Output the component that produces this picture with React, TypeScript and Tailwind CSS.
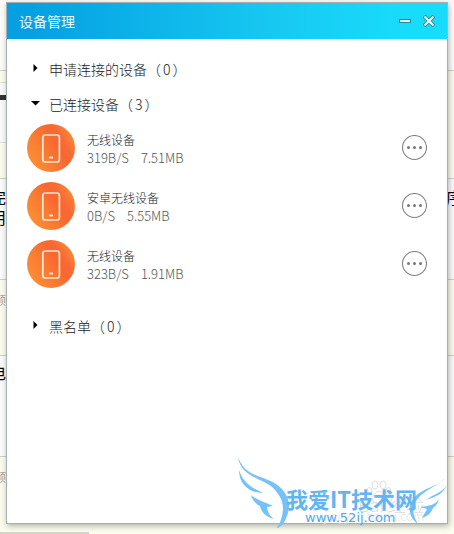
import React from "react";

type Device = { name: string; speed: string; total: string };

const devices: Device[] = [
  { name: "无线设备", speed: "319B/S", total: "7.51MB" },
  { name: "安卓无线设备", speed: "0B/S", total: "5.55MB" },
  { name: "无线设备", speed: "323B/S", total: "1.91MB" },
];

function PhoneIcon() {
  return (
    <svg viewBox="0 0 48 48" className="size-12 shrink-0" aria-hidden="true">
      <defs>
        <linearGradient id="disc" x1="0" y1="0.8" x2="1" y2="0.2">
          <stop offset="0" stopColor="#fb9236" />
          <stop offset="0.3" stopColor="#fb7f33" />
          <stop offset="0.62" stopColor="#f96731" />
          <stop offset="0.75" stopColor="#f86a35" />
          <stop offset="1" stopColor="#fb9036" />
        </linearGradient>
      </defs>
      <circle cx="24" cy="24" r="24" fill="url(#disc)" />
      <rect x="15.8" y="11" width="16.6" height="27" rx="2.5" fill="none" stroke="#ffe9cf" strokeWidth="1.7" />
      <path d="M22 33.5h4" stroke="#fff3dd" strokeWidth="1.8" />
    </svg>
  );
}

function MoreIcon() {
  return (
    <svg viewBox="0 0 26 26" className="size-[26px]" aria-hidden="true">
      <circle cx="13.5" cy="12.5" r="12" fill="none" stroke="#808080" strokeWidth="1.1" />
      <g fill="#777">
        <circle cx="7.5" cy="12.5" r="1.5" />
        <circle cx="13.5" cy="12.5" r="1.5" />
        <circle cx="19.5" cy="12.5" r="1.5" />
      </g>
    </svg>
  );
}

function GroupHeading({ label, count, open = false }: { label: string; count: number; open?: boolean }) {
  return (
    <button
      type="button"
      aria-expanded={open}
      className="flex h-5 items-center gap-2 pl-1 text-left text-sm leading-5 font-light text-[#222]"
    >
      <svg viewBox="0 0 10 10" className="size-2.5 shrink-0" aria-hidden="true">
        <path d={open ? "M0 2H9L4.5 6.5Z" : "M2.5 0V8L6.5 4Z"} fill="#000" />
      </svg>
      <span>
        {label}（<span className="mx-0.5">{count}</span>）
      </span>
    </button>
  );
}

function DeviceRow({ device }: { device: Device }) {
  return (
    <li className="flex items-center">
      <PhoneIcon />
      <div className="ml-3 flex-1 pt-1 font-light">
        <p className="text-xs leading-4 text-[#222]">{device.name}</p>
        <p className="flex gap-3 text-[13px] leading-5 text-[#555]">
          <span>{device.speed}</span>
          <span>{device.total}</span>
        </p>
      </div>
      <button type="button" aria-label="更多">
        <MoreIcon />
      </button>
    </li>
  );
}

function PageBehind() {
  return (
    <div className="flex min-h-screen flex-col bg-[#fcfcee] text-base leading-5 text-black">
      <div className="h-[71px] border-b border-[#d0d0c8] bg-[#fcfcfb]" />
      <div className="flex h-[108px] border-b border-[#cfcfc7]">
        <div className="flex w-[7px] flex-col">
          <div className="h-[11px]" />
          <div className="h-[61px] border-y border-[#dededa] bg-[#fafafa] pt-[12px]">
            <div className="h-[5px] bg-[#333]" />
          </div>
        </div>
      </div>
      <div className="flex h-[101px] justify-between border-b border-[#cfcfc7] bg-[#fbfbfb] pt-2">
        <div className="-ml-2.5 w-4">完用</div>
        <div className="-mr-2 w-4">序</div>
      </div>
      <div className="h-[76px] border-b border-[#cfcfc7] pt-2.5 text-xs leading-5 text-[#aaa]">
        <div className="-ml-1.5">倾</div>
      </div>
      <div className="h-[101px] border-b border-[#cfcfc7] bg-[#fbfbfb] pt-1.5">
        <div className="-ml-2.5">电</div>
      </div>
      <div className="h-[75px] pt-2.5 text-xs leading-5 text-[#aaa]">
        <div className="-ml-1.5">倾</div>
      </div>
      <div className="h-0.5 w-[89px] bg-[#d4d4cc]" />
    </div>
  );
}

function Watermark() {
  return (
    <div className="pointer-events-none absolute right-1.5 bottom-1.5 h-[72px] w-[218px]">
      <svg
        viewBox="0 0 26 24"
        className="absolute top-6 right-14 h-6 w-[26px]"
        fill="none"
        stroke="#dedede"
        aria-hidden="true"
      >
        <ellipse cx="9" cy="5" rx="3" ry="4" />
        <ellipse cx="17" cy="5" rx="3" ry="4" />
        <ellipse cx="3.5" cy="11" rx="2.5" ry="3.5" />
        <ellipse cx="22.5" cy="11" rx="2.5" ry="3.5" />
        <path d="M13 11C9 12 5 18 7 21s4 1 6 1 5 2 7-1-3-9-7-10Z" />
      </svg>
      <div className="absolute top-[38px] right-6 text-lg leading-5 font-light text-[#dcdcdc]">Bai 经验</div>
      <div className="absolute top-[52px] right-6 text-xs leading-4 font-light text-[#e4e4e4]">jingyan.baidu.com</div>
      <svg viewBox="0 0 218 72" className="absolute inset-0 h-[72px] w-[218px]" fill="#74c2f7" aria-hidden="true">
        <path d="M8 1C11 9 15 14 23 18C32 22 45 25 52 33C59 41 61 50 57 60Q54 69 48 72C46 72 47 71 48 70C53 62 55 49 50 41C46 34 41 29 34 26C22 20 10 16 8 1Z" />
        <path d="M9 14C13 26 20 31 33 37C19 37 9 28 9 14Z" />
        <path d="M21 39C28 45 35 46 43 50L37 51C38 57 40 60 44 63C36 61 31 56 30 50C26 48 22 44 21 39Z" />
        <path d="M217 19C211 28 199 32 190 40C182 47 181 58 188 68C179 62 177 50 184 42C193 31 210 31 217 19Z" />
        <path d="M217 29C214 37 206 41 196 44C204 38 213 36 217 29Z" />
        <path d="M209 43C205 49 199 50 190 51L197 53L192 62C198 60 201 57 203 52C206 50 208 47 209 43Z" />
      </svg>
      <div className="absolute top-[30px] left-[56px] text-[22px] leading-6 font-bold whitespace-nowrap text-[#62b5f1]">
        我爱IT技术网
      </div>
      <div className="absolute top-[54px] left-[75px] font-['DejaVu_Sans',sans-serif] text-[13px] leading-4 text-[#4eaaf0]">
        www.52ij.com
      </div>
    </div>
  );
}

export default function App() {
  return (
    <div className="relative min-h-screen overflow-hidden font-['Noto_Sans_CJK_SC',sans-serif]">
      <PageBehind />
      <section className="absolute inset-x-1.5 top-0.5 bottom-2.5 flex flex-col border border-[#a9aeae] bg-white shadow-[1px_2px_6px_rgba(0,0,0,0.3)]">
        <header className="flex h-9 shrink-0 items-center bg-linear-to-r from-[#06a0e2] from-5% via-[#17c8f1] via-60% to-[#18dcfb] to-90% px-3 text-[#e6fbff]">
          <h1 className="flex-1 text-sm font-normal">设备管理</h1>
          <div className="flex items-center gap-3">
            <button type="button" aria-label="最小化">
              <svg viewBox="0 0 12 12" className="size-3" aria-hidden="true">
                <path d="M0 6H12" stroke="#238ca5" strokeWidth="4" />
                <path d="M1 6H11" stroke="#eaffff" strokeWidth="2" />
              </svg>
            </button>
            <button type="button" aria-label="关闭">
              <svg viewBox="0 0 12 12" className="size-3" aria-hidden="true">
                <path d="M1 1L11 11M11 1L1 11" stroke="#238ca5" strokeWidth="4" />
                <path d="M1.5 1.5L10.5 10.5M10.5 1.5L1.5 10.5" stroke="#eaffff" strokeWidth="2.2" />
              </svg>
            </button>
          </div>
        </header>
        <main className="flex flex-col px-5 pt-5">
          <GroupHeading label="申请连接的设备" count={0} />
          <div className="pt-[15px]">
            <GroupHeading label="已连接设备" count={3} open />
          </div>
          <ul className="flex flex-col gap-2.5 pt-2.5 pb-7">
            {devices.map((device, index) => (
              <DeviceRow key={index} device={device} />
            ))}
          </ul>
          <GroupHeading label="黑名单" count={0} />
        </main>
      </section>
      <Watermark />
    </div>
  );
}
